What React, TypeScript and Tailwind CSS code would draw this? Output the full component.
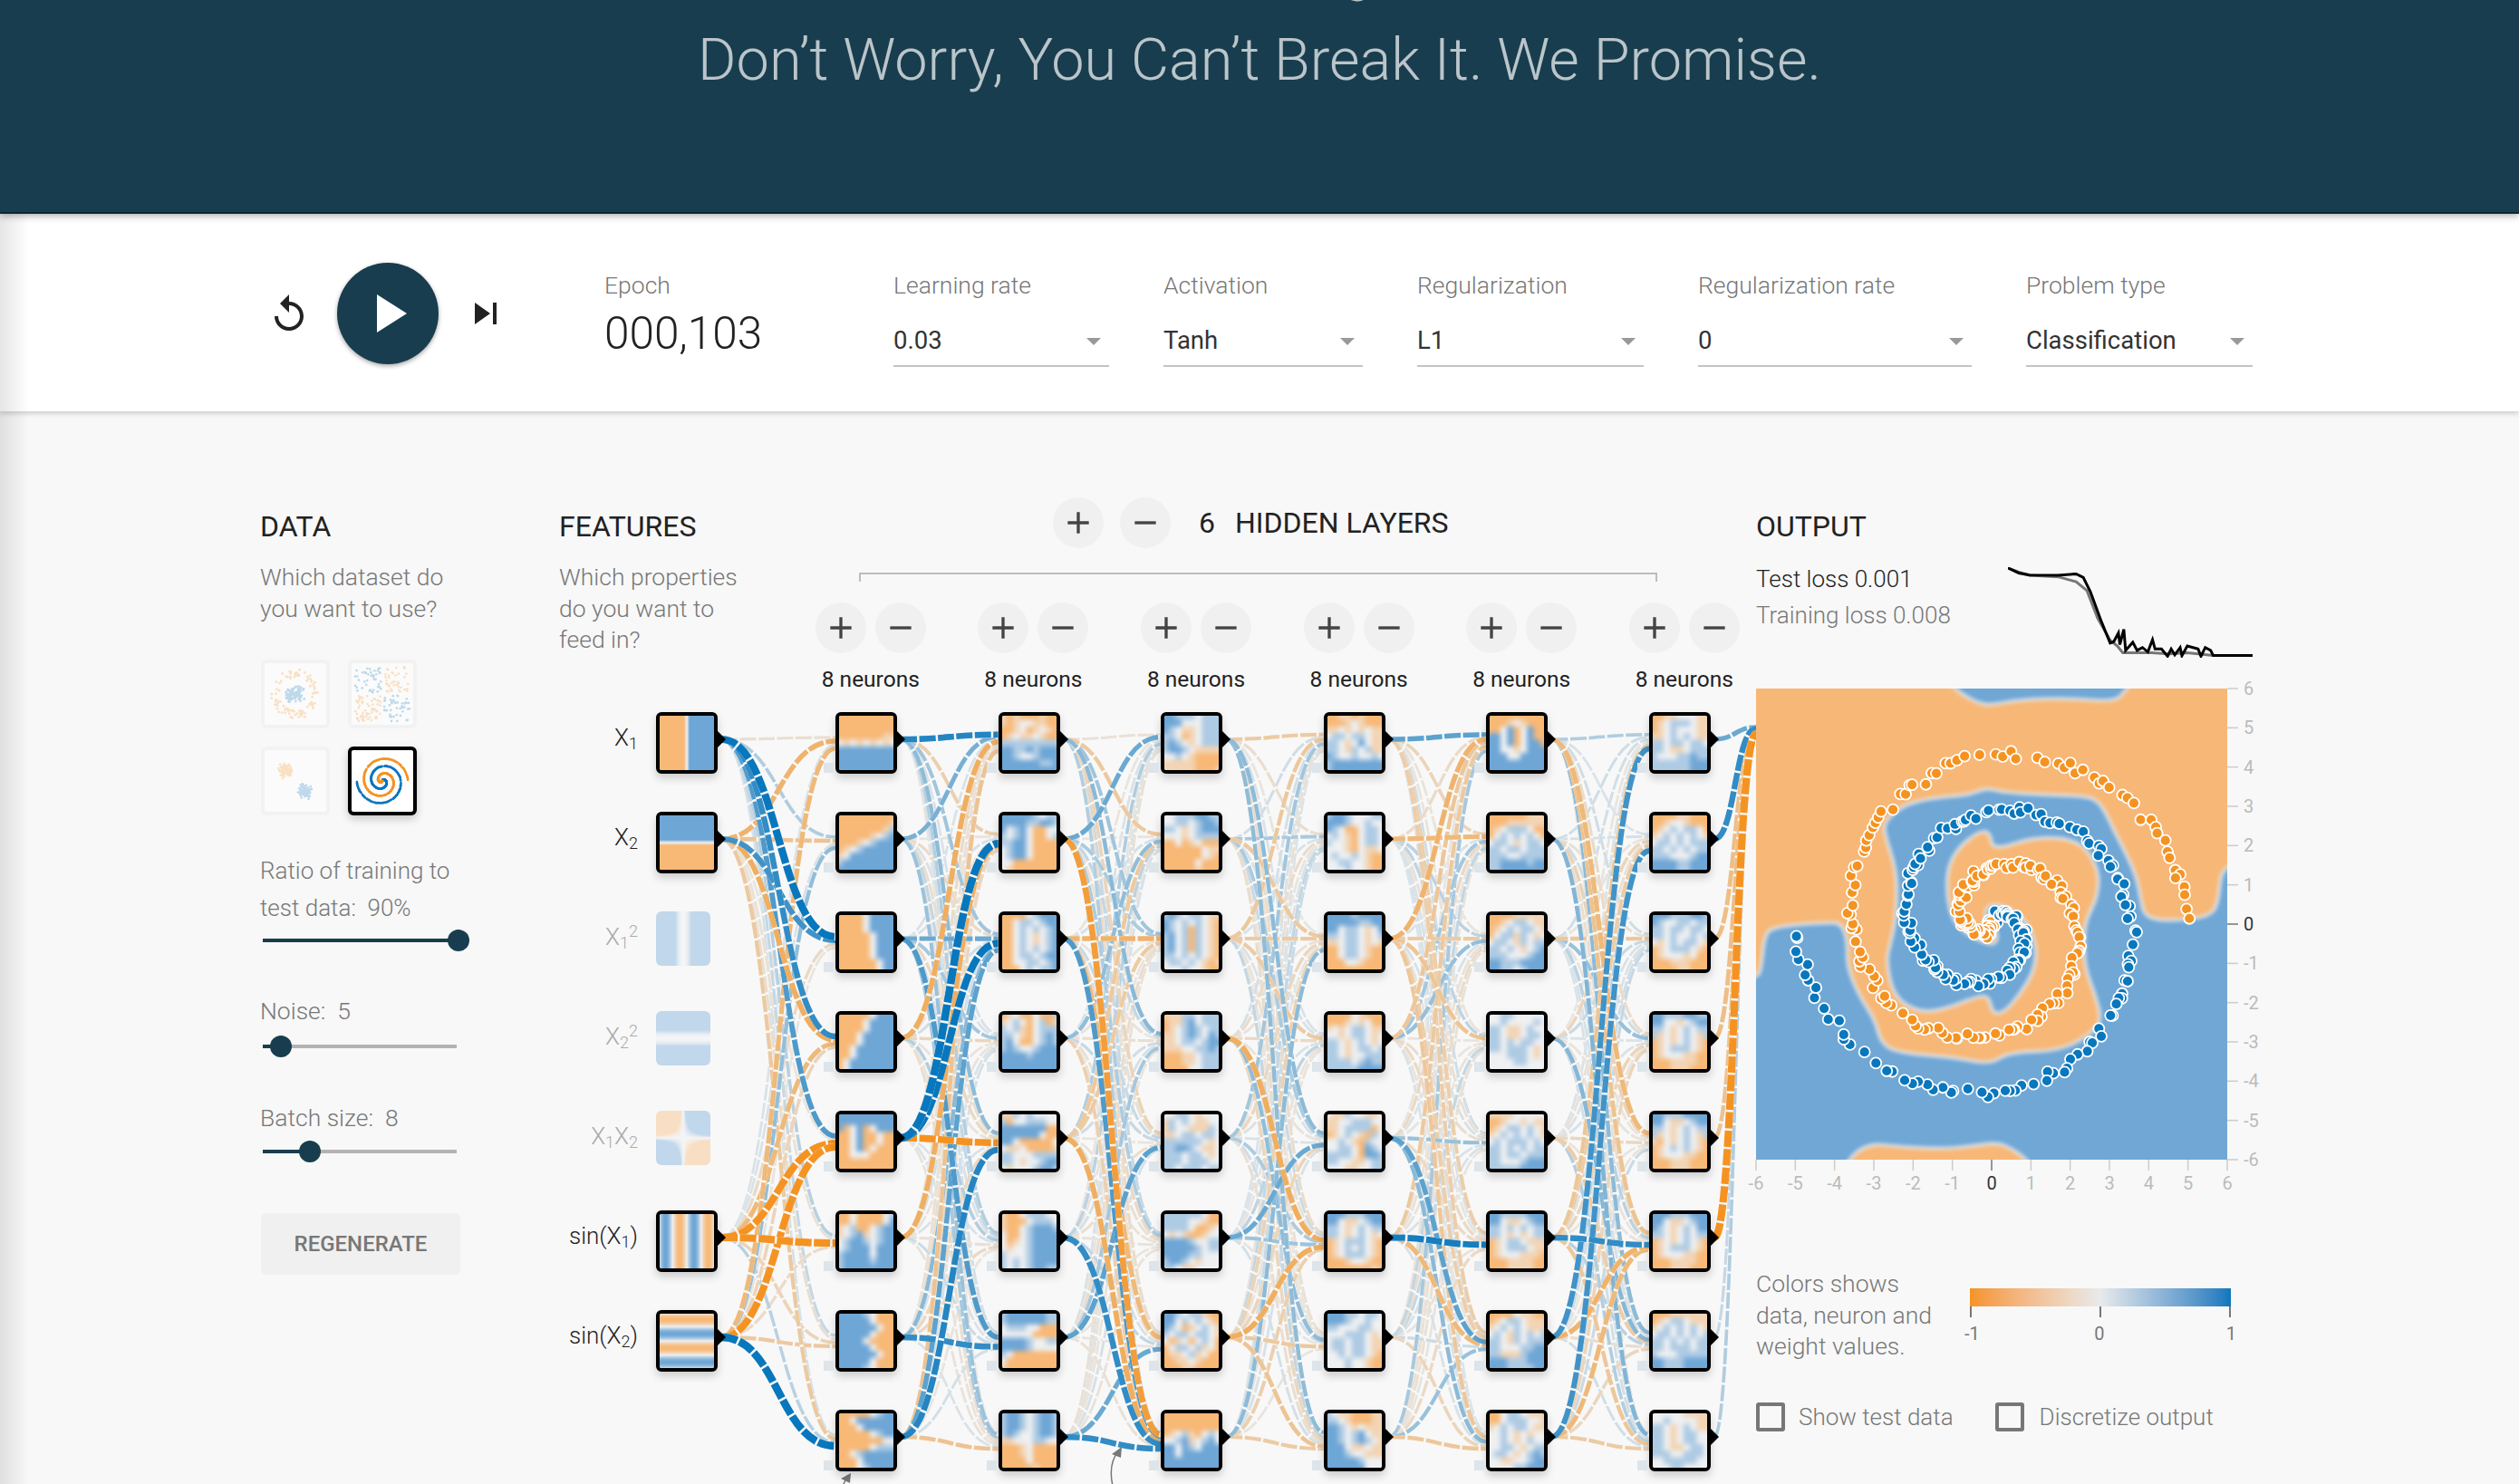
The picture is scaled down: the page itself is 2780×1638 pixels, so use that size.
import { useEffect, useRef } from "react";

type Rgb = [number, number, number];

const ORANGE: Rgb = [248, 184, 118];
const BLUE: Rgb = [110, 166, 214];
const NEUTRAL: Rgb = [238, 240, 242];

function rng(seed: number) {
  let a = seed;
  return () => {
    a |= 0;
    a = (a + 0x6d2b79f5) | 0;
    let t = Math.imul(a ^ (a >>> 15), 1 | a);
    t = (t + Math.imul(t ^ (t >>> 7), 61 | t)) ^ t;
    return ((t ^ (t >>> 14)) >>> 0) / 4294967296;
  };
}

function mix(a: Rgb, b: Rgb, t: number): Rgb {
  return [a[0] + (b[0] - a[0]) * t, a[1] + (b[1] - a[1]) * t, a[2] + (b[2] - a[2]) * t];
}

const clamp = (v: number) => Math.max(-1, Math.min(1, v));
const LETTER: Record<string, number> = { o: -1, a: -0.5, ".": 0, b: 0.5, B: 1 };

// neuron heatmaps, read row by row from the picture
const NEURONS: string[][] = [
  [
    "ooooooooo ooooooooo ooooooooo oooooooaa .a.a.a.a. BBBBBBBBB BBBBBBBBB BBBBBBBBB BBBBBBBBB",
    "ooooooooo ooooooooa oooooooab oooooa.bB oooa.bBBB oa.bBBBBB a.BBBBBBB bBBBBBBBB BBBBBBBBB",
    "oooo.BBBB oooo.BBBB oooo.BBBB ooooo.BBB ooooo.BBB ooooo.BBB ooooo.BBB oooooo.BB oooooo.BB",
    "ooooo.BBB oooo.BBBB oooo.BBBB ooo.BBBBB ooo.BBBBB oo.BBBBBB oo.BBBBBB o.BBBBBBB o.BBBBBBB",
    "BBBBBBBBB BBBBBBBBB Bo.Bo.BBB oo.Boo.oo oo.Boo.oo oo.Bo.ooo oo...oooo ooooooooo ooooooooo",
    "oo.oooo.b oo.oooo.B a.boo.bBB a.bBa.bBB .bBBb.bBB .bBBB.BBB bBBBB.BBB bBBBBbBBB bBBBBBBBB",
    "BBBBb.ooo BBBBB.ooo BBBBBB.oo BBBBB.ooo BBBB.oooo BBBBB.ooo BBBBBB.oo BBBBB.ooo BBBBb.ooo",
    "ooooo.bBB oo.BBBBBB ooo.BBBBB ooooo.bBB ooooooo.. ooooo.bbb oo.bBBBBB ooo.BBBBB ooo.bBBBB",
  ],
  [
    "aoaoooaoo aoa..aaoo ooa.oa.ao oa.aa.aoo bbbbbbbbb BBbbBbBBB BBb..bBBB BBBBBBbbB BBBBBBBBB",
    "BBBBBb.bb BBBBbbBBb B.bB.oo.. b.bB.oo.b bbBB.oooo .bBB.oooo .bBB.oooo ..ooooooo .aooooooo",
    "oooo.bBBB oo.bb.bBB oo.b.b.bB oo.b.a.bB oo.b.a.bB oo.b.b.bB oo.bb.bBB oo..bb.bB ooo.b.bbB",
    "oa.oo.oob a.b.o.boa b.bao.bbb bb.ao.bBb bB.oo.bBb bBb..bBBB BBBBbBBBB BBBBBBBBB BBBBBBBBB",
    "aab.b.... bo..bbb.. BBBBBBBoo BBBBBB.oo BB.ooooo. .aa.ooooa bb...bbbb bb.a..bBB .a...bBBb",
    "aoo.bbb.. aooo.bbb. aoo.bBBBb .oo.bBBBB .oa.bBBBB .a..bBBBB b...bBBBB b.b.bBBBB b.b.bBBbb",
    "bBBBBBBbb bBBBBBBbb .bbb..ooo .....oooo BBBBb..bb BBBBb.... b.ooooooo .oooooooo aoooooooo",
    "bBBb.bBBb bBBb.bBBb bBBb.bBBb bBb..bBBb aa...bb.. oooa.oooo oooa.oooo oooo.oooo oooooaooo",
  ],
  [
    "BBbbb.bbb BBB...bbb Bb.aa.bbb bb.oa.bbb bBb.a.bbb bBBb.aaaa ..b.aoooo aaaaaoooo aaaaaoooa",
    "..bbbBBbb ..bb.bBBb bb.a.bBBB ...a.bbbb oo.oa.ooo oooooo.aa oooooo.ao ooooo.ooo oooooaooo",
    "bBb.bb.aa Bb.b.b.ao Bb.bob.ao bB.bob.ao bB.bob.ao bB.bob.ao bb.b.b.ao .bb.b.aoa ...b..aoo",
    "aaabb.bbb oaabB.bbb oa.bBb.bb aa.bBb.Bb aa.bb.bBB aaa..bbBb oooaa.bbb oooaa.bbb oooo..bbb",
    "..bb.a... ab.b.aa.. ab..aaab. aa.bb.bb. bbbbbb.a. bbBBb.aa. bbb.bb.a. bbb.bbb.. bb.bbb.bb",
    "bbbbbb.oo bbbb..aoo bbbb.ooa. .a.aooa.. BBBBb..bb BBBBBb.bb BBBBbb... bBBb.a... bb.aa....",
    "BBb.bbaoo BB.b.b.ao Bb.oa.b.a b.bb.bb.a .oa.o.b.o o.bb.ba.o oaa.ba.oo ooaa.aooo oooaaoooo",
    "ooooooooo ooooooooo ooooooooo oa.bao.b. ..bBa.bB. BB.Bb.BBB BB.BBBBBB BBBBBBBBB BBBBBBBBB",
  ],
  [
    "ooaaoaooo oooa.aooo aa.a.a.aa .bb.bb.aa bb.a.B.aa bb.ab.baa Bb..b..b. bBBBBBBBB bBBBBBBBB",
    "bBBb...bb BBBb..b.. Bb.oo.bb. .b.ao.bb. b..ao.bb. ...ao.aa. .b..b.aoo ..bb..aoo ...b..aoo",
    "BBBBbBBBB BBBBBbbBB BB.bb.a.B bb.bb.a.b aa.bb.a.a oo.bb.aoo oo.bb.aoo ooo..aooo ooooooooo",
    "oooo.aooo oooa.a.oo a.a.bb.aa ..a.bb.a. bb.a.b.a. bb.a.bb.b bb.a..bbb bbbb.bBbb bbbbbBBBB",
    ".aab..aa. aa..bbb.. aa.bbbbo. oa.b.aob. ..b.aob.. ..bb.oBb. bbbb.oBBb bb..aa.bb ...aa..bb",
    "BBBbbbBBB BB.aa.bBB bb.a.b.bb bb.a.b.a. oa.bbb.ao oa.b.b.ao oa.bbb.ao oooa..aoo oooooooao",
    "BBBbb.bb. BBBb..b.. bb...bb.. ...bbb.a. .bb.bb.aa .bb.bb.aa ..b.bb.ao ...b..aoo ...b..aoo",
    "b.aaoooaa bb.aoooaa BBb.a.aaa BBb.bB.aa BBb.bBb.a BBB.aa.aa BBBb..aaa BBBBBb... BBBBBB...",
  ],
  [
    "ooooooooo oooa.aooo oo.Bo.Boo BB.Bo.Boo BB.Bo.BBo BB..a.BBB BBB..BBBB BBBBBBBBB BBBBBBBBB",
    "ooooooaaa oooaaaaaa oa.bbb.oo o.b.b.b.o .bb.a.bb. bb.bb.bbb bbb..bbbb bbBBBBbBB bbBBBBBBB",
    "ooooaaaaa ooa.bb.aa oa.b.bb.a o.bbab.a. .bb.ab.bb bb.b.a.bB bbb...bBB BBbbbBBBB BBbb.bBBB",
    "..bb..... ..b....b. bb.aa.b.. bb.aa.bb. bb.b.bb.. bb.bbb.a. ...bbb.a. ....bb... .........",
    "aaaa..... ooa..a.aa oa.bb.b.a a.b.b.b.a .b.bbb.b. bb.b.b.bb bb.bb.bbb bb...bBBB bbbbbBBBB",
    "BBbbbbBBB BB.aa.bBB bb.b.b.bb bb.a.a.bb oa.bb.aaa oa.bbb.aa oa...aaao oooaaaaoo oooaaaaoo",
    "oooo.aaoo oa.bb.aaa a.b.b.aaa .b.ab.b.b bb.ab.bbb bb...bbBB bbaaabBBB BBBbbbBBB BBBbbbbBB",
    "oo.bb.aaa oo.bbb..a a.b.bb.aa ..b.a.a.. ..b.a.b.. ..bb.a.bb .bb.a.bBb ..aa..bBB ....bbBBB",
  ],
  [
    "ooaa...aa oa.bbb.aa oa.b...aa aa.b.b.aa bb.bb.bb. bb.aa.bbb b...bbBbb bbbbbbBBB bbbbbbBBB",
    "ooooaaooo ooa..aooo oa.b.bb.o a.b.b.b.a .bb.b.bbb bb.b.b.bb bbb...bBB BBBBbbBBB BBBBbbBBB",
    "BBBbbbBBb Bb..bb.bb bb.bb.bb. bb.b..b.b .a.b.bb.a oa.bbb.ao oa...a.oo oooaaaooo ooooaaooo",
    "BBbbbBBbb BB..a.bBB bb.a.b.bb ba.a.b.ab oa.a.b.ao oa.bbb.ao oa...aaoo oooaaaaoo oooaaaooo",
    "BBbbbBBBB BB.aa.bBB bb.a.b.bb ba.a.b.ab ao.a.b.ao oa.b.b.ao oa...aaoo oooaaaooo oooaaaooo",
    "BBBbbbBBB BB.aa.bBB Bb.a.b.BB bb.a.b.bb oa.a.b.ao oa.bbb.ao oa...aaoo oooaaaaoo oooaaaooo",
    "oooaaaaaa oa.bb.aaa a.b.b.b.a .bb.b.b.b bb.b.b.bb bb.bbb.bb b...bbbbb BBbbbBBBB BBbbbBBBB",
    ".....aaaa ..b....aa bb.a.b.aa bb.a.bb.. bb.a.bb.. bb.aa.bb. bbb..bbb. ..bbbbb.. ...bb....",
  ],
];

function Heat({ rows, fn }: { rows?: string; fn?: (x: number, y: number) => number }) {
  const ref = useRef<HTMLCanvasElement>(null);
  const grid = rows ? rows.split(" ") : null;
  const size = grid ? 9 : 64;
  useEffect(() => {
    const ctx = ref.current?.getContext("2d");
    if (!ctx) return;
    const img = ctx.createImageData(size, size);
    for (let r = 0; r < size; r++) {
      for (let c = 0; c < size; c++) {
        const x = ((c + 0.5) / size) * 12 - 6;
        const y = 6 - ((r + 0.5) / size) * 12;
        const v = grid ? LETTER[grid[r]?.[c] ?? "."] ?? 0 : fn!(x, y);
        const col = v < 0 ? mix(NEUTRAL, ORANGE, -v) : mix(NEUTRAL, BLUE, v);
        const i = (r * size + c) * 4;
        img.data[i] = col[0];
        img.data[i + 1] = col[1];
        img.data[i + 2] = col[2];
        img.data[i + 3] = 255;
      }
    }
    ctx.putImageData(img, 0, 0);
  }, []);
  return <canvas ref={ref} width={size} height={size} className={`block h-full w-full ${grid ? "scale-110 blur-[1.5px]" : ""}`} />;
}

// ---- network geometry, in page coordinates ----
const NODE = 68;
const rowTop = (r: number) => 786 + 110 * r;
const layerX = (l: number) => 922 + 179.6 * l;
const FEATURE_ROWS = [0, 1, 5, 6];

const STRONG: Record<string, number> = {
  "0:0:2": 0.95, "0:0:3": 0.65, "0:0:4": 0.55, "0:0:1": 0.2,
  "0:1:0": -0.5, "0:1:1": -0.35, "0:1:2": 0.6, "0:1:3": -0.55,
  "0:2:5": -0.95, "0:2:4": -0.9, "0:2:3": -0.45,
  "0:3:7": 1, "0:3:4": -0.9, "0:3:0": -0.45, "0:3:6": -0.3,
  "1:0:0": 0.7, "1:1:0": 0.4, "1:4:1": 1, "1:4:2": 0.9, "1:2:2": 0.45, "1:4:4": -0.85,
  "1:7:4": 0.7, "1:6:6": 0.65, "1:7:7": -0.35, "1:3:0": -0.55, "1:5:1": -0.55, "1:2:6": 0.55, "1:7:2": 0.5,
  "2:1:0": 0.45, "2:1:7": -0.7, "2:0:1": -0.3, "2:2:2": -0.5, "2:7:7": 0.65, "2:2:7": 0.55,
  "2:5:7": 0.65, "2:4:7": -0.55, "2:7:6": 0.45, "2:4:1": -0.3, "2:2:6": -0.45, "2:6:4": 0.5,
  "3:0:0": -0.28, "3:1:1": 0.22, "3:3:5": -0.55, "3:6:5": -0.55, "3:5:4": 0.45, "3:7:7": -0.28, "3:2:2": -0.28,
  "4:0:0": 0.5, "4:1:1": -0.45, "4:2:0": -0.5, "4:5:5": 0.75, "4:4:4": 0.28, "4:7:7": -0.32,
  "4:7:6": 0.28, "4:2:2": -0.28, "4:4:6": 0.5, "4:5:6": -0.45,
  "5:0:0": 0.2, "5:5:5": 0.65, "5:6:5": -0.5, "5:7:5": -0.45, "5:7:1": 0.6, "5:6:0": 0.6,
  "5:7:7": -0.28, "5:2:2": -0.32, "5:0:4": -0.45, "5:3:6": 0.35,
};
const OUT_WEIGHTS = [0.45, 0.65, -0.4, -0.4, -0.35, -0.95, 0.12, 0.2];

type Link = { d: string; w: number };

function curve(sx: number, sy: number, dx: number, dy: number) {
  const m = (sx + dx) / 2;
  return `M${sx} ${sy}C${m} ${sy} ${m} ${dy} ${dx} ${dy}`;
}

function buildLinks(): Link[] {
  const rand = rng(4242);
  const out: Link[] = [];
  const weight = (key: string) => {
    const r = rand();
    const s = rand() < 0.55 ? -1 : 1;
    return STRONG[key] ?? s * (0.05 + r * r * r * 0.32);
  };
  for (let src = 0; src < 4; src++) {
    for (let dst = 0; dst < 8; dst++) {
      const dy = rowTop(dst) + 34 + (src - 1.5) * 4;
      out.push({ d: curve(796, rowTop(FEATURE_ROWS[src]) + 30, layerX(0), dy), w: weight(`0:${src}:${dst}`) });
    }
  }
  for (let l = 0; l < 5; l++) {
    for (let src = 0; src < 8; src++) {
      for (let dst = 0; dst < 8; dst++) {
        const dy = rowTop(dst) + 34 + (src - 3.5) * 2.6;
        out.push({ d: curve(layerX(l) + NODE + 4, rowTop(src) + 30, layerX(l + 1), dy), w: weight(`${l + 1}:${src}:${dst}`) });
      }
    }
  }
  OUT_WEIGHTS.forEach((w, src) => {
    out.push({ d: curve(layerX(5) + NODE + 4, rowTop(src) + 30, 1938, 808 + (src - 3.5) * 1.5), w });
  });
  return out.sort((a, b) => Math.abs(a.w) - Math.abs(b.w));
}

function linkColor(w: number) {
  const t = Math.min(1, Math.abs(w) * 1.25);
  const c = mix([232, 234, 235], w < 0 ? [245, 147, 34] : [8, 119, 189], t);
  return `rgb(${c[0] | 0},${c[1] | 0},${c[2] | 0})`;
}

const LINKS = buildLinks();

function Links() {
  return (
    <svg className="absolute inset-0" width={1321} height={878} viewBox="617 760 1321 878">
      {LINKS.map((l, i) => (
        <g key={i} fill="none" strokeWidth={2.5 + Math.abs(l.w) * 6}>
          <path d={l.d} stroke="#f9f9f9" />
          <path d={l.d} stroke={linkColor(l.w)} strokeDasharray="18 2.5" />
        </g>
      ))}
      <path d="M1228 1640C1224 1622 1227 1610 1235 1601" fill="none" stroke="#777" strokeWidth="1.5" />
      <polygon points="1238,1597 1227,1605 1237,1609" fill="#777" />
      <path d="M930 1640L936 1628" fill="none" stroke="#777" strokeWidth="1.5" />
      <polygon points="939,1626 928,1632 938,1637" fill="#777" />
    </svg>
  );
}

function Node({ x, y, rows, fn, bias }: { x: number; y: number; rows?: string; fn?: (x: number, y: number) => number; bias?: boolean }) {
  return (
    <div className="absolute h-[68px] w-[68px]" style={{ left: x - 617, top: y - 760 }}>
      {bias && <div className="absolute left-[-13px] top-[56px] h-[11px] w-[11px] bg-[#dde4ea]" />}
      <div className="h-full w-full overflow-hidden rounded-[6px] border-4 border-black bg-white shadow-[0_5px_10px_rgba(0,0,0,0.18)]">
        <Heat rows={rows} fn={fn} />
      </div>
      <svg className="absolute left-[66px] top-[18px]" width="12" height="24">
        <polygon points="0,1 11,12 0,23" fill="#000" />
      </svg>
    </div>
  );
}

const FEATURES = [
  { label: <>X<sub>1</sub></>, fn: (x: number) => clamp(x * 1.6), on: true },
  { label: <>X<sub>2</sub></>, fn: (_: number, y: number) => clamp(y * 1.6), on: true },
  { label: <>X<sub>1</sub><sup>2</sup></>, fn: (x: number) => clamp((x * x) / 3), on: false },
  { label: <>X<sub>2</sub><sup>2</sup></>, fn: (_: number, y: number) => clamp((y * y) / 3), on: false },
  { label: <>X<sub>1</sub>X<sub>2</sub></>, fn: (x: number, y: number) => clamp((x * y) / 3), on: false },
  { label: <>sin(X<sub>1</sub>)</>, fn: (x: number) => Math.sin(x), on: true },
  { label: <>sin(X<sub>2</sub>)</>, fn: (_: number, y: number) => Math.sin(y), on: true },
];

function Diagram() {
  return (
    <div className="absolute left-0 top-[199px] h-[878px] w-[1321px] [&_sub]:text-[18px] [&_sup]:text-[18px]">
      <Links />
      {FEATURES.map((f, i) => (
        <div key={i}>
          <div
            className={`absolute flex h-[68px] w-[100px] items-center justify-end pb-[12px] text-[26px] font-light ${f.on ? "text-[#222]" : "text-[#aaa]"}`}
            style={{ left: 704 - 100 - 617, top: rowTop(i) - 760 }}
          >
            <span>{f.label}</span>
          </div>
          {f.on ? (
            <Node x={724} y={rowTop(i)} fn={f.fn as (x: number, y: number) => number} />
          ) : (
            <div className="absolute h-[60px] w-[60px] overflow-hidden rounded-[6px] opacity-40" style={{ left: 724 - 617, top: rowTop(i) - 760 }}>
              <Heat fn={f.fn as (x: number, y: number) => number} />
            </div>
          )}
        </div>
      ))}
      {NEURONS.map((layer, l) =>
        layer.map((rows, r) => <Node key={`${l}-${r}`} x={layerX(l)} y={rowTop(r)} rows={rows} bias />)
      )}
    </div>
  );
}

// ---- small data thumbnails ----
type Pt = { x: number; y: number; c: number };

function spiralPts(n: number, noise: number, seed: number): Pt[] {
  const rand = rng(seed);
  const out: Pt[] = [];
  for (const [delta, c] of [[0, 1], [Math.PI, 0]] as const) {
    for (let i = 0; i < n; i++) {
      if (rand() < 0.1) continue;
      const r = (i / n) * 5;
      const t = 1.75 * (i / n) * 2 * Math.PI + delta;
      out.push({ x: r * Math.sin(t) + (rand() - 0.5) * noise, y: r * Math.cos(t) + (rand() - 0.5) * noise, c });
    }
  }
  return out;
}

function circlePts(): Pt[] {
  const rand = rng(11);
  const out: Pt[] = [];
  for (let i = 0; i < 90; i++) {
    const a = rand() * 6.283;
    const r = rand() * 2;
    out.push({ x: r * Math.cos(a), y: r * Math.sin(a), c: 1 });
    const q = 3.2 + rand() * 1.6;
    out.push({ x: q * Math.cos(a + 1), y: q * Math.sin(a + 1), c: 0 });
  }
  return out;
}

function xorPts(): Pt[] {
  const rand = rng(12);
  const out: Pt[] = [];
  for (let i = 0; i < 190; i++) {
    const x = rand() * 10 - 5;
    const y = rand() * 10 - 5;
    out.push({ x: x + (x > 0 ? 0.3 : -0.3), y: y + (y > 0 ? 0.3 : -0.3), c: x * y < 0 ? 1 : 0 });
  }
  return out.map((p) => ({ ...p, c: p.x * p.y < 0 ? 1 : 0 }));
}

function gaussPts(): Pt[] {
  const rand = rng(13);
  const g = () => (rand() + rand() + rand() - 1.5) * 1.1;
  const out: Pt[] = [];
  for (let i = 0; i < 90; i++) {
    out.push({ x: -1.9 + g(), y: 2.1 + g(), c: 0 });
    out.push({ x: 1.9 + g(), y: -2.1 + g(), c: 1 });
  }
  return out;
}

function Thumb({ pts, selected, r = 1.1 }: { pts: Pt[]; selected?: boolean; r?: number }) {
  return (
    <div
      className={`h-[76px] w-[76px] rounded-[6px] border-4 ${selected ? "border-black bg-white shadow-[0_4px_10px_rgba(0,0,0,0.2)]" : "border-[#f2f2f2] bg-[#fbfbfb]"}`}
    >
      <svg viewBox="-6 -6 12 12" className={`block h-full w-full ${selected ? "" : "opacity-25"}`}>
        {pts.map((p, i) => (
          <circle key={i} cx={p.x} cy={-p.y} r={r * 0.17} fill={p.c ? "#0877bd" : "#f59322"} />
        ))}
      </svg>
    </div>
  );
}

function Slider({ at }: { at: number }) {
  return (
    <div className="relative ml-[3px] h-6 w-[214px]">
      <div className="absolute left-0 top-[10px] h-1 w-full bg-[#b3b3b3]" />
      <div className="absolute left-0 top-[10px] h-1 bg-[#183d4e]" style={{ width: at }} />
      <div className="absolute top-0 h-6 w-6 rounded-full bg-[#183d4e]" style={{ left: at - 12 }} />
    </div>
  );
}

function RoundButton({ minus }: { minus?: boolean }) {
  return (
    <button className="flex h-14 w-14 items-center justify-center rounded-full bg-[#f0f0f0]">
      <svg viewBox="0 0 24 24" width="40" height="40" fill="#444">
        <path d={minus ? "M19 13H5v-2h14v2z" : "M19 13h-6v6h-2v-6H5v-2h6V5h2v6h6v2z"} />
      </svg>
    </button>
  );
}

function Select({ label, value, width }: { label: string; value: string; width: string }) {
  return (
    <div className={width}>
      <div className="h-[34px] text-[26.5px] font-light leading-[34px] text-[#777]">{label}</div>
      <div className="mt-[9px] flex h-[64px] items-start justify-between border-b-2 border-[#c4c4c4] pr-[9px] pt-[17px]">
        <span className="text-[27.5px] leading-[36px] text-[#333]">{value}</span>
        <span className="mt-[15px] h-0 w-0 border-x-[8px] border-t-[8px] border-x-transparent border-t-[#999]" />
      </div>
    </div>
  );
}

// ---- output ----
const BLUE_AREA =
  "-200,900 96,890 110,860 118,770 140,738 300,725 335,730 352,780 350,850 380,930 430,1010 442,1065 480,1100 650,1115 750,1135 800,1100 950,1095 1040,1040 1060,1000 1040,930 1015,860 1010,790 1015,720 1050,650 1052,570 1000,490 880,478 755,520 750,468 720,462 650,520 625,600 640,720 700,770 765,795 770,750 735,720 738,680 770,672 830,700 865,750 880,810 870,870 835,930 790,985 755,990 745,935 700,945 640,970 580,985 530,975 490,945 470,900 460,830 470,790 485,720 490,620 480,550 460,490 450,440 500,392 560,372 640,362 690,358 740,338 780,350 900,358 1025,362 1060,385 1095,460 1135,540 1160,600 1170,660 1180,705 1220,720 1300,718 1365,705 1385,670 1392,590 1411,565 1450,540 1800,540 1800,1800 900,1800 870,1440 850,1410 820,1385 770,1360 700,1372 600,1380 470,1370 420,1365 370,1390 340,1440 300,1800 -200,1800";
const TOP_BLUE = "630,20 650,52 680,75 720,95 750,100 830,85 960,80 1090,90 1120,70 1150,20";
const DOTS = spiralPts(250, 0.22, 77);

// rounds the traced outline off through the midpoints of its edges
function smooth(points: string) {
  const p = points.split(" ").map((s) => s.split(",").map(Number));
  const mid = (a: number[], b: number[]) => `${(a[0] + b[0]) / 2} ${(a[1] + b[1]) / 2}`;
  let d = `M${mid(p[p.length - 1], p[0])}`;
  p.forEach((q, i) => {
    d += `Q${q[0]} ${q[1]} ${mid(q, p[(i + 1) % p.length])}`;
  });
  return d + "Z";
}

const TEST_LINE =
  "800,258 830,275 860,282 940,283 990,278 1010,290 1030,340 1060,440 1085,515 1095,510 1108,480 1112,520 1123,468 1128,540 1148,512 1160,540 1175,530 1190,545 1203,503 1210,535 1228,535 1245,560 1255,535 1265,555 1280,530 1285,558 1300,525 1330,535 1338,560 1350,530 1365,540 1372,557 1482,557";
const TRAIN_LINE =
  "800,258 830,272 860,283 940,288 990,305 1020,335 1050,430 1085,505 1105,525 1120,548 1200,548 1250,552 1300,548 1372,557 1482,557";

function Axis() {
  const t = [-6, -5, -4, -3, -2, -1, 0, 1, 2, 3, 4, 5, 6];
  return (
    <>
      {t.map((v) => {
        const p = ((v + 6) / 12) * 520;
        const zero = v === 0;
        return (
          <g key={v} className="font-[Roboto,sans-serif] text-[20px]">
            <line x1={520} x2={532} y1={520 - p} y2={520 - p} stroke={zero ? "#777" : "#ccc"} strokeWidth="1.5" />
            <line x1={p} x2={p} y1={520} y2={532} stroke={zero ? "#777" : "#ccc"} strokeWidth="1.5" />
            <text x={538} y={527 - p} fill={zero ? "#333" : "#bbb"}>{v}</text>
            <text x={p} y={553} textAnchor="middle" fill={zero ? "#333" : "#bbb"}>{v}</text>
          </g>
        );
      })}
    </>
  );
}

function OutputPlot() {
  return (
    <svg className="-ml-[20px] mt-[24px] block overflow-visible" width="590" height="570" viewBox="-20 -10 590 570">
      <svg x="0" y="0" width="520" height="520" viewBox="96 52 1315 1358" preserveAspectRatio="none">
        <defs>
          <filter id="soft" filterUnits="userSpaceOnUse" x="-300" y="-100" width="2200" height="2000">
            <feGaussianBlur stdDeviation="5" />
          </filter>
        </defs>
        <rect x="96" y="52" width="1315" height="1358" fill="#f7b777" />
        <g filter="url(#soft)" fill="#70a7d5" stroke="#e4edf2" strokeWidth="7" strokeLinejoin="round">
          <path d={smooth(BLUE_AREA)} />
          <path d={smooth(TOP_BLUE)} />
        </g>
      </svg>
      {DOTS.map((p, i) => (
        <circle key={i} cx={260 + p.x * 43.33} cy={260 - p.y * 43.33} r="6" fill={p.c ? "#0877bd" : "#f59322"} stroke="#fff" strokeWidth="1.8" />
      ))}
      <Axis />
    </svg>
  );
}

const LAYERS = [0, 1, 2, 3, 4, 5];
const DESC = "text-[26.5px] font-light leading-[34.5px] text-[#777]";
const TITLE = "h-10 text-[32px] leading-10 text-[#222]";

export default function App() {
  return (
    <div className="relative h-[1638px] w-full overflow-hidden bg-[#f8f8f8] font-[Roboto,sans-serif]">
      {/* --- HEADER --- */}
      <header className="relative z-20 h-[236px] overflow-hidden border-b-2 border-[#0e2632] bg-[#183d4e] text-center text-[64.8px] font-light leading-[100px] text-white/70 shadow-[0_2px_8px_rgba(0,0,0,0.35)]">
        <h1 className="-mt-[84px]">Tinker With a Neural Network Right Here in Your Browser.</h1>
        <h2>Don’t Worry, You Can’t Break It. We Promise.</h2>
      </header>

      {/* --- CONTROLS --- */}
      <section className="relative z-10 flex h-[218px] items-start bg-white pl-[295px] shadow-[0_2px_6px_rgba(0,0,0,0.2)]">
        <svg viewBox="0 0 24 24" width="48" height="48" fill="#222" className="mt-[87px]">
          <path d="M12 5V1L7 6l5 5V7c3.31 0 6 2.69 6 6s-2.69 6-6 6-6-2.69-6-6H4c0 4.42 3.58 8 8 8s8-3.58 8-8-3.58-8-8-8z" />
        </svg>
        <button className="ml-[29px] mt-[54px] flex h-28 w-28 items-center justify-center rounded-full bg-[#183d4e] shadow-[0_2px_5px_rgba(0,0,0,0.35)]">
          <svg viewBox="0 0 24 24" width="72" height="72" fill="#fff">
            <path d="M8 5v14l11-7z" />
          </svg>
        </button>
        <svg viewBox="0 0 24 24" width="48" height="48" fill="#222" className="ml-[28px] mt-[86px]">
          <path d="M6 18l8.5-6L6 6v12zM16 6v12h2V6h-2z" />
        </svg>
        <div className="ml-[107px] mt-[62px] w-[319px]">
          <div className="h-[34px] text-[26.5px] font-light leading-[34px] text-[#777]">Epoch</div>
          <div className="mt-[8px] text-[49.5px] font-light leading-[56px] text-[#222]">000,103</div>
        </div>
        <div className="mt-[62px] flex gap-[60px]">
          <Select label="Learning rate" value="0.03" width="w-[238px]" />
          <Select label="Activation" value="Tanh" width="w-[220px]" />
          <Select label="Regularization" value="L1" width="w-[250px]" />
          <Select label="Regularization rate" value="0" width="w-[302px]" />
          <Select label="Problem type" value="Classification" width="w-[250px]" />
        </div>
      </section>

      {/* ombre sur le bord gauche */}
      <div className="pointer-events-none absolute bottom-0 left-0 top-[236px] z-30 w-[32px] bg-gradient-to-r from-black/10 to-transparent" />

      {/* --- MAIN --- */}
      <main className="flex pl-[287px] pt-[107px]">
        {/* Data */}
        <div className="w-[330px] shrink-0">
          <h4 className={TITLE}>DATA</h4>
          <p className={`${DESC} mt-[19px]`}>Which dataset do<br />you want to use?</p>
          <div className="ml-[1px] mt-[39px] grid w-[172px] grid-cols-2 gap-5">
            <Thumb pts={circlePts()} r={1.5} />
            <Thumb pts={xorPts()} r={1.4} />
            <Thumb pts={gaussPts()} r={1.4} />
            <Thumb pts={spiralPts(260, 0.08, 5)} selected r={1.4} />
          </div>
          <p className="mt-[41px] text-[26px] font-light leading-[41px] text-[#777]">
            Ratio of training to<br />test data:&nbsp; 90%
          </p>
          <div className="mt-[3px]"><Slider at={216} /></div>
          <p className={`${DESC} mt-[49px]`}>Noise:&nbsp; 5</p>
          <div className="mt-[9px]"><Slider at={20} /></div>
          <p className={`${DESC} mt-[50px]`}>Batch size:&nbsp; 8</p>
          <div className="mt-[8px]"><Slider at={52} /></div>
          <button className="ml-[1px] mt-[56px] h-[68px] w-[220px] rounded-[6px] bg-[#f0f0f0] text-[24px] font-medium text-[#777]">
            REGENERATE
          </button>
        </div>

        {/* Features + network */}
        <div className="relative w-[1321px] shrink-0">
          <Diagram />
          <div className="relative flex">
            <div className="w-[254px] shrink-0">
              <h4 className={TITLE}>FEATURES</h4>
              <p className={`${DESC} mt-[19px]`}>Which properties<br />do you want to<br />feed in?</p>
            </div>
            <div className="-mt-[12px] shrink-0">
              <div className="ml-[291px] flex items-center gap-[18px]">
                <RoundButton />
                <RoundButton minus />
                <span className="ml-[13px] text-[32px] text-[#222]">6</span>
                <span className="ml-[4px] text-[32px] text-[#222]">HIDDEN LAYERS</span>
              </div>
              <div className="ml-[77px] mt-[27px] h-[10px] w-[881px] border-x-2 border-t-2 border-[#bdbdbd]" />
              <div className="mt-[23px] flex">
                {LAYERS.map((l) => (
                  <div key={l} className="w-[179.6px] shrink-0">
                    <div className="flex justify-center gap-[10px]">
                      <RoundButton />
                      <RoundButton minus />
                    </div>
                    <div className="mt-[14px] text-center text-[24.5px] leading-[30px] text-[#222]">8 neurons</div>
                  </div>
                ))}
              </div>
            </div>
          </div>
        </div>

        {/* Output */}
        <div className="relative w-[550px] shrink-0">
          <h4 className={TITLE}>OUTPUT</h4>
          <div className="flex">
            <div className="mt-[18px] w-[278px] text-[26px] font-light leading-[40px]">
              <div className="text-[#222]">Test loss 0.001</div>
              <div className="text-[#777]">Training loss 0.008</div>
            </div>
            <svg className="mt-[25px]" width="270" height="100" viewBox="800 255 682 310" preserveAspectRatio="none" fill="none">
              <polyline points={TRAIN_LINE} stroke="#777" strokeWidth="3" vectorEffect="non-scaling-stroke" />
              <polyline points={TEST_LINE} stroke="#000" strokeWidth="3" vectorEffect="non-scaling-stroke" />
            </svg>
          </div>
          <OutputPlot />
          <div className="mt-[80px] flex">
            <p className={`${DESC} w-[236px]`}>Colors shows<br />data, neuron and<br />weight values.</p>
            <div className="mt-[22px] w-[288px]">
              <div className="h-5 bg-gradient-to-r from-[#f59322] via-[#e8eaeb] to-[#0877bd]" />
              <div className="flex justify-between">
                <span className="h-3 w-[2px] bg-[#777]" />
                <span className="h-3 w-[2px] bg-[#777]" />
                <span className="h-3 w-[2px] bg-[#777]" />
              </div>
              <div className="-mx-[6px] mt-[6px] flex justify-between text-[20px] leading-6 text-[#777]">
                <span>-1</span>
                <span className="-ml-[8px]">0</span>
                <span>1</span>
              </div>
            </div>
          </div>
          <div className="mt-[41px] flex items-center text-[26px] font-light text-[#777]">
            <span className="h-8 w-8 rounded-[3px] border-4 border-[#777]" />
            <span className="ml-[15px]">Show test data</span>
            <span className="ml-[46px] h-8 w-8 rounded-[3px] border-4 border-[#777]" />
            <span className="ml-[17px]">Discretize output</span>
          </div>
        </div>
      </main>
    </div>
  );
}
